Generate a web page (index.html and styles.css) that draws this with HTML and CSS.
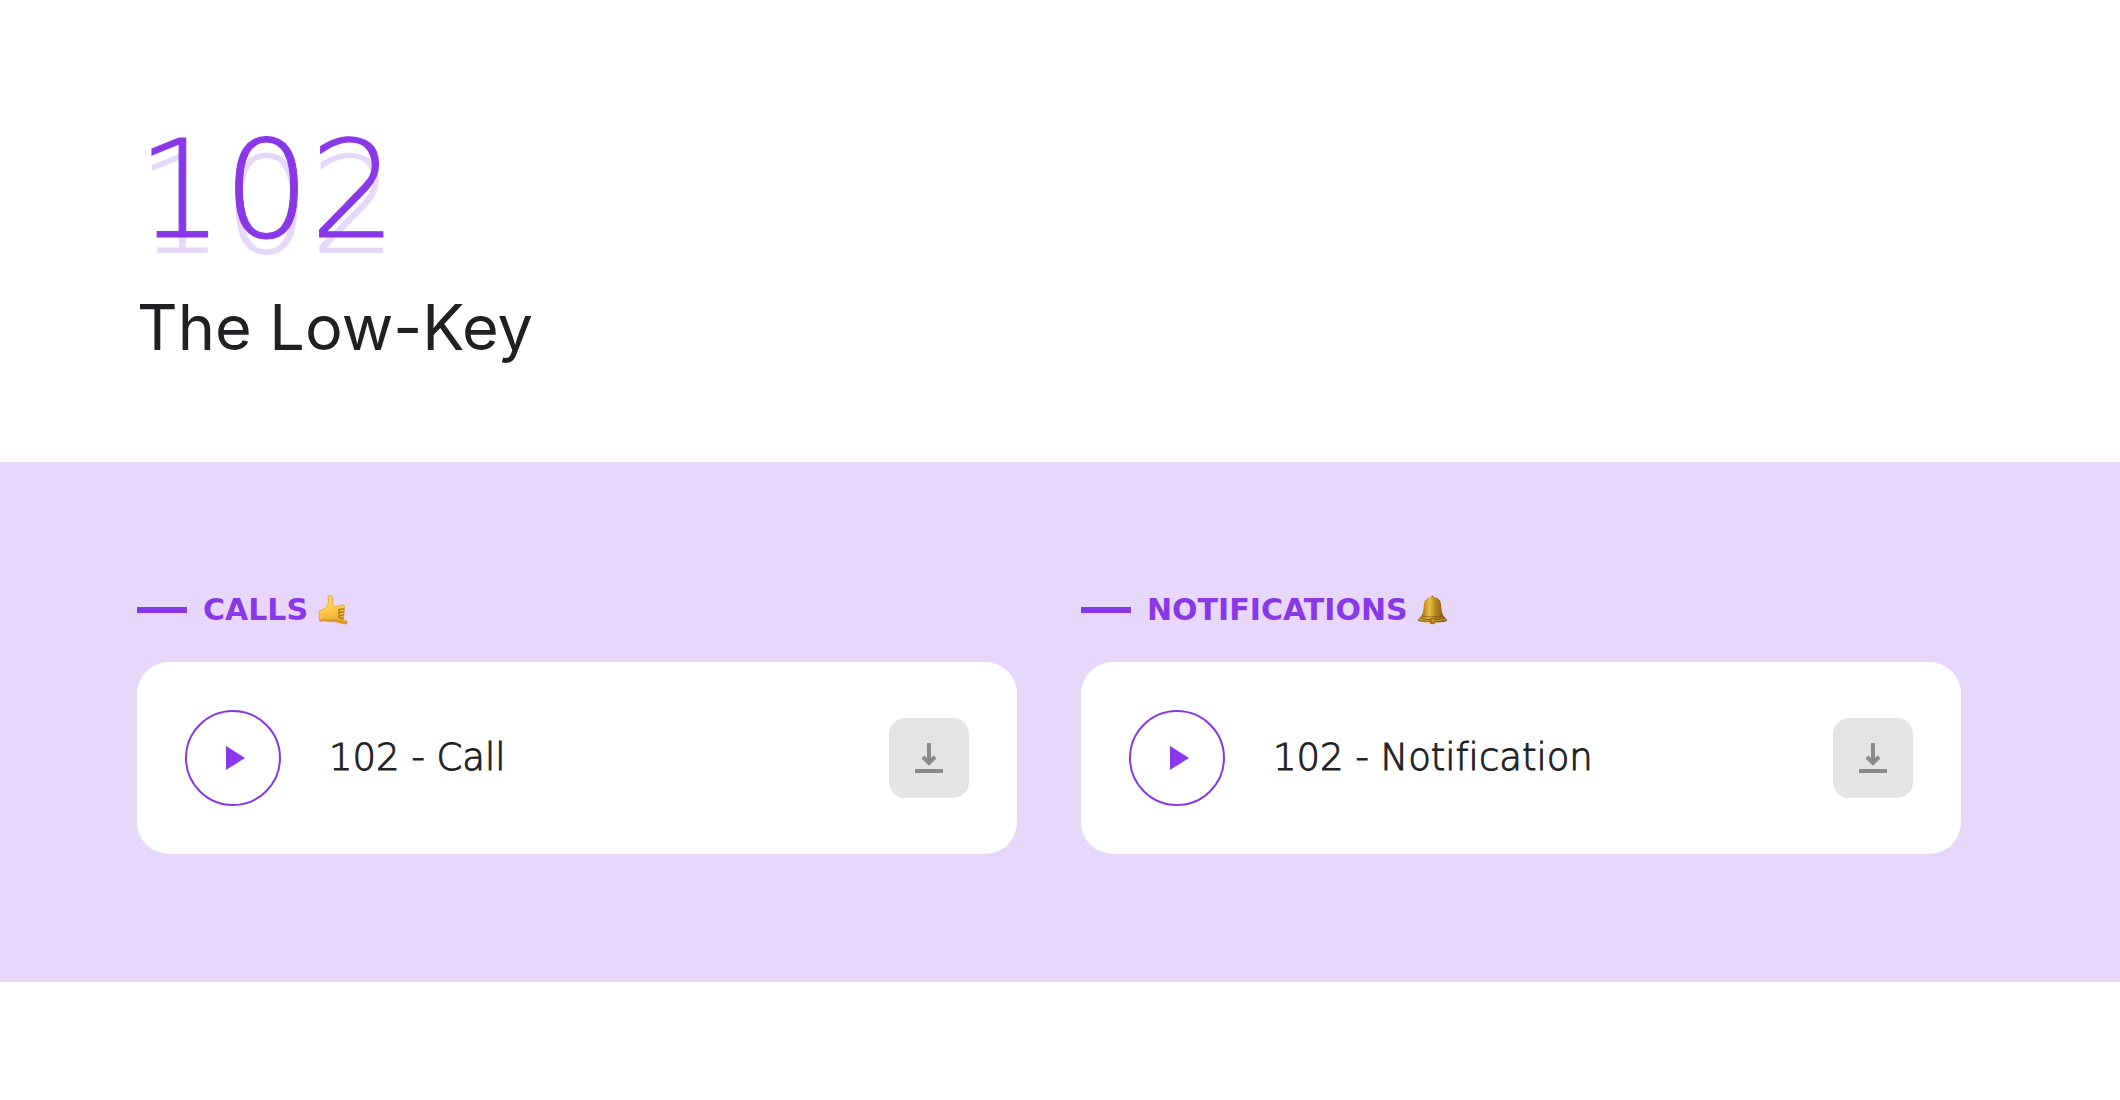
FILE: index.html
```html
<!DOCTYPE html>
<html lang="en">
<head>
<meta charset="utf-8">
<meta name="viewport" content="width=device-width, initial-scale=1">
<title>102 - The Low-Key</title>
<link rel="stylesheet" href="styles.css">
</head>
<body>
<header class="hero">
  <h1 class="hero-number">102</h1>
  <p class="hero-title">The Low-Key</p>
</header>
<main class="sounds">
  <section class="group">
    <h2 class="group-title">
      <span class="dash"></span>
      <span>CALLS</span>
      <svg class="emoji" viewBox="0 0 30 30" role="img" aria-label="Call me hand">
        <defs>
          <linearGradient id="skin" x1="0" y1="0" x2="0.3" y2="1">
            <stop offset="0" stop-color="#ffd95c"/>
            <stop offset="0.6" stop-color="#fdc846"/>
            <stop offset="1" stop-color="#eda52c"/>
          </linearGradient>
        </defs>
        <path fill="url(#skin)" stroke="#d9952d" stroke-width="0.6" d="M10 1.500c.2-1.500 3.800-1.500 4.400.2.700 2.500.2 4.800.6 7.300.4 2.200 1.800 3.200 3.300 2.500l4.700-1.500c2-.6 3.700.3 3.800 1.800.1 1-.4 1.500-1 2 .9.900.8 2.200-.1 2.900.9.900.6 2.300-.4 2.900 1 .9.800 2.200 0 3.200l-.3 2.200 3.300.9c1.600.7 1.200 3.200-.8 3.200-3-.1-6.500-1.600-10.200-2.200-4-.1-8.200.2-11-.9-1.600.9-3.400.6-4.500-.1-1-2.500-1-7.500-.7-10 3.200-1.100 5.800-2.100 7.600-4.200 2-3 1.800-6.500 1.300-10.200Z"/>
        <path fill="none" stroke="#a86a28" stroke-width="1.200" stroke-linecap="round" stroke-linejoin="round" d="M26.200 13.800l-4.700.5c-1.300.3-1.300 1.500-.2 1.900M26 16.900l-4.500.5c-1.200.3-1.200 1.500-.2 1.900M25.600 20l-4 .5c-1.100.4-.8 1.700.3 2.100l3.500 1"/>
        <path fill="none" stroke="#c48530" stroke-width="0.900" stroke-linecap="round" d="M2 25.300c2 .3 3.500-.3 4.500-1.300M7 24.500c3.500 1.200 7.500 1.100 11.500 1l9.500 2.400"/>
      </svg>
    </h2>
    <article class="card">
      <button class="play" type="button" aria-label="Play 102 - Call">
        <svg class="play-icon" viewBox="0 0 19 24"><path fill="currentColor" d="M0 0l19 12L0 24Z"/></svg>
      </button>
      <h3 class="card-title">102 - Call</h3>
      <button class="download" type="button" aria-label="Download 102 - Call">
        <svg class="download-icon" viewBox="0 0 28 30"><path fill="currentColor" d="M12 0h4v15l2.700-2.500 2.800 2.800L14 22.800 6.500 15.300l2.800-2.800L12 15ZM0 26h28v4H0Z"/></svg>
      </button>
    </article>
  </section>
  <section class="group">
    <h2 class="group-title">
      <span class="dash"></span>
      <span>NOTIFICATIONS</span>
      <svg class="emoji" viewBox="0 0 30 30" role="img" aria-label="Bell">
        <defs>
          <linearGradient id="brass" x1="0" y1="0" x2="1" y2="0">
            <stop offset="0" stop-color="#8a5b0c"/>
            <stop offset="0.25" stop-color="#c9951f"/>
            <stop offset="0.4" stop-color="#e6c04a"/>
            <stop offset="0.6" stop-color="#b5851c"/>
            <stop offset="0.85" stop-color="#8d6414"/>
            <stop offset="1" stop-color="#704907"/>
          </linearGradient>
        </defs>
        <circle cx="14.500" cy="2" r="1.500" fill="#a87817"/>
        <path fill="url(#brass)" d="M14.500 2c5.200 0 8 2.700 8.500 7 .5 4.700.7 9.500 2.600 12 .9 1.200 2.800 2.500 3.500 4 .4 1.300-3.600 2-7.800 2.400H7.700C3.500 27-.5 26.300-.1 25c.7-1.500 2.600-2.800 3.500-4 1.900-2.500 2.100-7.300 2.600-12 .5-4.300 3.300-7 8.500-7Z"/>
        <path fill="none" stroke="#7b520b" stroke-width="0.700" d="M4 20.800c5.500 1.500 15.500 1.500 21 0"/>
        <ellipse cx="14.500" cy="25.300" rx="11.500" ry="1.500" fill="#704907"/>
        <path fill="none" stroke="#d9b045" stroke-width="1" stroke-linecap="round" d="M1.500 24.600c7 1.200 19 1.200 26 0"/>
        <circle cx="14.500" cy="26" r="3.200" fill="#a9701c"/>
        <circle cx="15" cy="25.600" r="1.300" fill="#d99a4a"/>
      </svg>
    </h2>
    <article class="card">
      <button class="play" type="button" aria-label="Play 102 - Notification">
        <svg class="play-icon" viewBox="0 0 19 24"><path fill="currentColor" d="M0 0l19 12L0 24Z"/></svg>
      </button>
      <h3 class="card-title">102 - Notification</h3>
      <button class="download" type="button" aria-label="Download 102 - Notification">
        <svg class="download-icon" viewBox="0 0 28 30"><path fill="currentColor" d="M12 0h4v15l2.700-2.500 2.800 2.800L14 22.800 6.500 15.300l2.800-2.800L12 15ZM0 26h28v4H0Z"/></svg>
      </button>
    </article>
  </section>
</main>
</body>
</html>
```
FILE: styles.css
```css
:root {
  --purple: #8838e8;
  --lilac: #e7d7fb;
  --ink: #1f1f24;
}

* {
  box-sizing: border-box;
}

body {
  margin: 0;
  background: #fff;
  color: var(--ink);
  font-family: "DejaVu Sans", sans-serif;
  font-variant-ligatures: none;
}

h1, h2, h3, p {
  margin: 0;
}

.hero {
  padding: 112px 159px 96px 137px;
}

.hero-number {
  color: var(--purple);
  font-size: 136px;
  font-weight: 200;
  line-height: 156px;
  text-shadow: 0 16px 0 var(--lilac);
  -webkit-text-stroke: 1px var(--purple);
}

.hero-title {
  margin-top: 20px;
  font-family: Inter, sans-serif;
  font-size: 63px;
  line-height: 78px;
}

.sounds {
  display: grid;
  grid-template-columns: repeat(auto-fit, minmax(600px, 1fr));
  gap: 64px;
  padding: 128px 159px 128px 137px;
  background: var(--lilac);
}

.group-title {
  display: flex;
  align-items: center;
  margin-bottom: 32px;
  color: var(--purple);
  font-size: 30px;
  font-weight: 700;
  line-height: 40px;
}

.dash {
  width: 50px;
  height: 6px;
  margin-right: 16px;
  background: var(--purple);
}

.emoji {
  width: 30px;
  height: 30px;
  margin-left: 10px;
}

.card {
  display: flex;
  align-items: center;
  gap: 48px;
  padding: 48px;
  border-radius: 32px;
  background: #fff;
}

.play {
  display: flex;
  align-items: center;
  justify-content: center;
  width: 96px;
  height: 96px;
  padding: 0 0 0 4px;
  border: 2px solid var(--purple);
  border-radius: 50%;
  background: none;
  color: var(--purple);
}

.play-icon {
  width: 19px;
  height: 24px;
}

.card-title {
  flex: 1;
  font-size: 37px;
  font-weight: 200;
  line-height: 48px;
  -webkit-text-stroke: 1px var(--ink);
}

.download {
  display: flex;
  align-items: center;
  justify-content: center;
  width: 80px;
  height: 80px;
  padding: 0;
  border: 0;
  border-radius: 16px;
  background: #e4e4e4;
  color: #8a8a8a;
}

.download-icon {
  width: 28px;
  height: 30px;
}
```
